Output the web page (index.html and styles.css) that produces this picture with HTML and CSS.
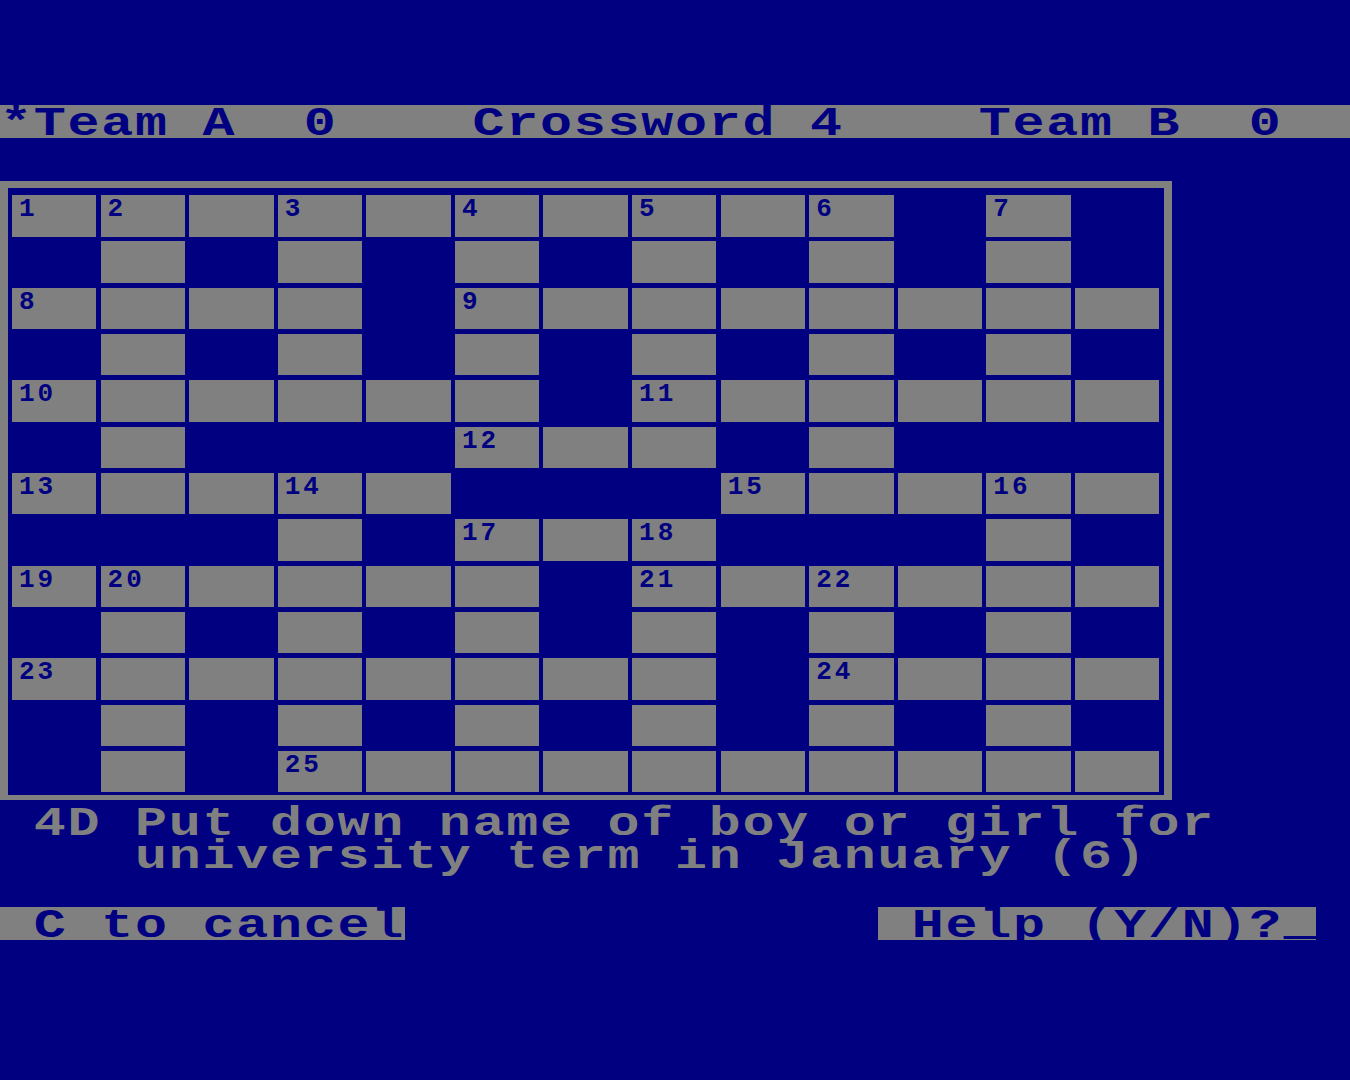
FILE: index.html
```html
<!DOCTYPE html>
<html lang="en">
<head>
<meta charset="utf-8">
<title>Crossword 4</title>
<link rel="stylesheet" href="styles.css">
</head>
<body>
<div class="screen">
  <div class="status txt"><span class="s">*Team A  0    Crossword 4    Team B  0</span></div>

  <div class="board">
    <div class="sq">1</div><div class="sq">2</div><div class="sq"></div><div class="sq">3</div><div class="sq"></div><div class="sq">4</div><div class="sq"></div><div class="sq">5</div><div class="sq"></div><div class="sq">6</div><div class="blk"></div><div class="sq">7</div><div class="blk"></div>

    <div class="blk"></div><div class="sq"></div><div class="blk"></div><div class="sq"></div><div class="blk"></div><div class="sq"></div><div class="blk"></div><div class="sq"></div><div class="blk"></div><div class="sq"></div><div class="blk"></div><div class="sq"></div><div class="blk"></div>

    <div class="sq">8</div><div class="sq"></div><div class="sq"></div><div class="sq"></div><div class="blk"></div><div class="sq">9</div><div class="sq"></div><div class="sq"></div><div class="sq"></div><div class="sq"></div><div class="sq"></div><div class="sq"></div><div class="sq"></div>

    <div class="blk"></div><div class="sq"></div><div class="blk"></div><div class="sq"></div><div class="blk"></div><div class="sq"></div><div class="blk"></div><div class="sq"></div><div class="blk"></div><div class="sq"></div><div class="blk"></div><div class="sq"></div><div class="blk"></div>

    <div class="sq">10</div><div class="sq"></div><div class="sq"></div><div class="sq"></div><div class="sq"></div><div class="sq"></div><div class="blk"></div><div class="sq">11</div><div class="sq"></div><div class="sq"></div><div class="sq"></div><div class="sq"></div><div class="sq"></div>

    <div class="blk"></div><div class="sq"></div><div class="blk"></div><div class="blk"></div><div class="blk"></div><div class="sq">12</div><div class="sq"></div><div class="sq"></div><div class="blk"></div><div class="sq"></div><div class="blk"></div><div class="blk"></div><div class="blk"></div>

    <div class="sq">13</div><div class="sq"></div><div class="sq"></div><div class="sq">14</div><div class="sq"></div><div class="blk"></div><div class="blk"></div><div class="blk"></div><div class="sq">15</div><div class="sq"></div><div class="sq"></div><div class="sq">16</div><div class="sq"></div>

    <div class="blk"></div><div class="blk"></div><div class="blk"></div><div class="sq"></div><div class="blk"></div><div class="sq">17</div><div class="sq"></div><div class="sq">18</div><div class="blk"></div><div class="blk"></div><div class="blk"></div><div class="sq"></div><div class="blk"></div>

    <div class="sq">19</div><div class="sq">20</div><div class="sq"></div><div class="sq"></div><div class="sq"></div><div class="sq"></div><div class="blk"></div><div class="sq">21</div><div class="sq"></div><div class="sq">22</div><div class="sq"></div><div class="sq"></div><div class="sq"></div>

    <div class="blk"></div><div class="sq"></div><div class="blk"></div><div class="sq"></div><div class="blk"></div><div class="sq"></div><div class="blk"></div><div class="sq"></div><div class="blk"></div><div class="sq"></div><div class="blk"></div><div class="sq"></div><div class="blk"></div>

    <div class="sq">23</div><div class="sq"></div><div class="sq"></div><div class="sq"></div><div class="sq"></div><div class="sq"></div><div class="sq"></div><div class="sq"></div><div class="blk"></div><div class="sq">24</div><div class="sq"></div><div class="sq"></div><div class="sq"></div>

    <div class="blk"></div><div class="sq"></div><div class="blk"></div><div class="sq"></div><div class="blk"></div><div class="sq"></div><div class="blk"></div><div class="sq"></div><div class="blk"></div><div class="sq"></div><div class="blk"></div><div class="sq"></div><div class="blk"></div>

    <div class="blk"></div><div class="sq"></div><div class="blk"></div><div class="sq">25</div><div class="sq"></div><div class="sq"></div><div class="sq"></div><div class="sq"></div><div class="sq"></div><div class="sq"></div><div class="sq"></div><div class="sq"></div><div class="sq"></div>
  </div>

  <div class="clue txt"><span class="s"> 4D Put down name of boy or girl for
    university term in January (6)</span></div>

  <div class="foot">
    <div class="key cancel txt"><span class="s"> C to cancel</span></div>
    <div class="key help txt"><span class="s"> Help (Y/N)?<span class="cursor"></span></span></div>
  </div>
</div>
</body>
</html>
```

FILE: styles.css
```css
html, body {
  margin: 0;
  padding: 0;
}

body {
  width: 1350px;
  height: 1080px;
  overflow: hidden;
  background: #000080;
  color: #808080;
  font-family: "Liberation Mono", "DejaVu Sans Mono", monospace;
  font-weight: 700;
}

.screen {
  padding-top: 105px;
}

.txt {
  font-size: 41px;
  white-space: pre;
}

/* glyphs widened to the wide pixel font of the original screen:
   24.6px advance + 1.36px spacing, x1.3 = 33.75px per column */
.s {
  display: inline-block;
  vertical-align: top;
  letter-spacing: 1.36px;
  transform: scaleX(1.3);
  transform-origin: 0 0;
}

.status {
  height: 33px;
  line-height: 38px;
  background: #808080;
  color: #000080;
}

.board {
  margin-top: 43px;
  width: 1147.6px;
  border-style: solid;
  border-color: #808080;
  border-width: 7px 8px 5px 8px;
  padding: 7px 4px 3px 4px;
  display: grid;
  grid-template-columns: repeat(13, 84.4px);
  grid-template-rows: repeat(13, 41.5px);
  column-gap: 4.2px;
  row-gap: 4.83px;
}

.sq {
  box-sizing: border-box;
  background: #808080;
  color: #000080;
  font-size: 26px;
  line-height: 20px;
  letter-spacing: 3px;
  padding: 4px 0 0 7px;
}

.blk {
  background: transparent;
}

.clue {
  margin-top: 8px;
  line-height: 33px;
  height: 66px;
}

.foot {
  display: flex;
  margin-top: 32.5px;
}

.key {
  height: 33px;
  line-height: 38px;
  background: #808080;
  color: #000080;
  overflow: visible;
}

.cancel {
  width: 405px;
}

.help {
  width: 438.75px;
  margin-left: auto;
  margin-right: 33.75px;
}

.cursor {
  display: inline-block;
  vertical-align: top;
  width: 25.96px;
  height: 34px;
  background: linear-gradient(to bottom, transparent 29px, #000080 29px, #000080 32px, transparent 32px);
}
```
